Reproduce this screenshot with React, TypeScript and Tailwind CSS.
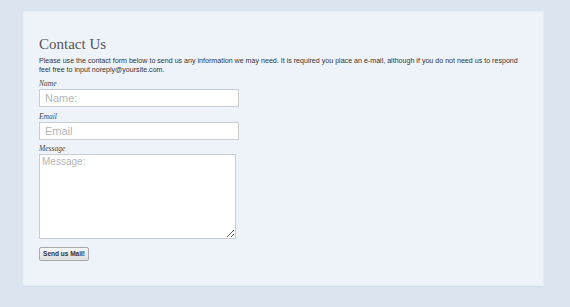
export default function App() {
  return (
    <div className="min-h-[307px] w-[570px] bg-[#dbe5ef] pt-[11px] pl-[23px]">
      <div className="w-[521px] h-[275px] bg-[#eef3fa] border border-[#e6edf5] shadow-[0_1px_0_#d3dce7] pl-[15px] pr-[20px] pt-[21px]">
        <h1 className="font-['Liberation_Serif',serif] text-[15px] leading-[22px] text-[#555]">Contact Us</h1>
        <p className="mt-[2px] font-['Liberation_Sans',sans-serif] text-[7.1px] leading-[9px] text-[#333]">
          Please use the contact form below to send us any information we may need. It is required you place an e-mail, although if you do not need us to respond feel free to input noreply@yoursite.com.
        </p>
        <form className="mt-[5px] flex flex-col items-start" onSubmit={(e) => e.preventDefault()}>
          <label className="font-['Liberation_Serif',serif] italic text-[7.5px] leading-[8px] text-[#444]">Name</label>
          <input
            placeholder="Name:"
            className="mt-[1px] w-[200px] h-[18px] bg-white border border-[#c9ccd0] px-[5px] font-['Liberation_Sans',sans-serif] text-[11px] text-[#555] placeholder:text-[#b5b5b5] outline-none"
          />
          <label className="mt-[6px] font-['Liberation_Serif',serif] italic text-[7.5px] leading-[8px] text-[#444]">Email</label>
          <input
            placeholder="Email"
            className="mt-[1px] w-[200px] h-[18px] bg-white border border-[#c9ccd0] px-[5px] font-['Liberation_Sans',sans-serif] text-[11px] text-[#555] placeholder:text-[#b5b5b5] outline-none"
          />
          <label className="mt-[5px] font-['Liberation_Serif',serif] italic text-[7.5px] leading-[8px] text-[#444]">Message</label>
          <textarea
            placeholder="Message:"
            className="mt-[1px] w-[197px] h-[85px] bg-white border border-[#c9ccd0] px-[2px] py-[1px] font-['Liberation_Sans',sans-serif] text-[10px] leading-[12px] text-[#555] placeholder:text-[#b5b5b5] outline-none"
          />
          <button
            type="submit"
            className="mt-[8px] w-[50px] h-[14px] whitespace-nowrap bg-gradient-to-b from-[#f7f7f7] to-[#dedede] border border-[#a9a9a9] rounded-[2px] font-['Liberation_Sans',sans-serif] font-bold text-[6.5px] leading-[12px] text-[#333]"
          >
            Send us Mail!
          </button>
        </form>
      </div>
    </div>
  );
}
